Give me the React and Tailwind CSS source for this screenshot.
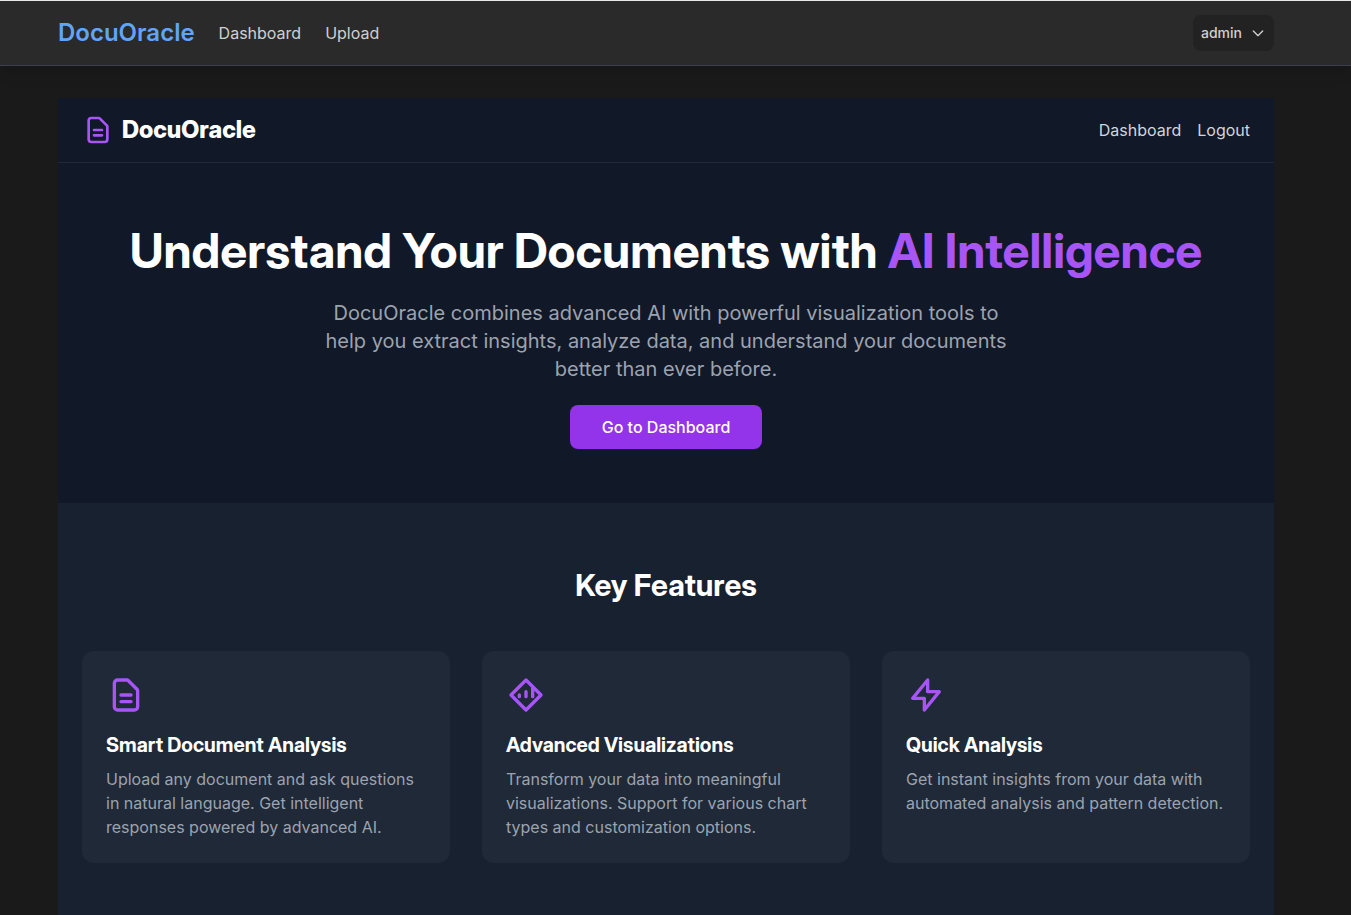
const iconPaths = {
  document:
    "M9 12h6m-6 4h6m2 5H7a2 2 0 01-2-2V5a2 2 0 012-2h5.586a1 1 0 01.707.293l5.414 5.414a1 1 0 01.293.707V19a2 2 0 01-2 2z",
  chart: "M8 13v-1m4 1v-3m4 3V8M12 21l9-9-9-9-9 9 9 9z",
  bolt: "M13 10V3L4 14h7v7l9-11h-7z",
  chevron: "M19 9l-7 7-7-7",
};

const features = [
  {
    icon: "document",
    title: "Smart Document Analysis",
    text: "Upload any document and ask questions in natural language. Get intelligent responses powered by advanced AI.",
  },
  {
    icon: "chart",
    title: "Advanced Visualizations",
    text: "Transform your data into meaningful visualizations. Support for various chart types and customization options.",
  },
  {
    icon: "bolt",
    title: "Quick Analysis",
    text: "Get instant insights from your data with automated analysis and pattern detection.",
  },
];

function Icon({ name, className }) {
  return (
    <svg
      className={className}
      viewBox="0 0 24 24"
      fill="none"
      stroke="currentColor"
      strokeWidth="2"
      strokeLinecap="round"
      strokeLinejoin="round"
      aria-hidden="true"
    >
      <path d={iconPaths[name]} />
    </svg>
  );
}

function TopNav() {
  return (
    <nav className="border-t border-b border-t-[#e5e7eb] border-b-[#374151] bg-[#2a2a2a] pr-[19px] shadow-lg">
      <div className="mx-auto flex h-16 max-w-7xl items-center justify-between px-8">
        <div className="flex items-center gap-6">
          <a href="#home" className="text-2xl font-semibold text-[#60a5fa]">
            DocuOracle
          </a>
          <a href="#dashboard" className="text-[#d0d0d0]">
            Dashboard
          </a>
          <a href="#upload" className="text-[#d0d0d0]">
            Upload
          </a>
        </div>
        <button
          type="button"
          className="flex h-9 items-center gap-2 rounded-lg bg-[#222222] px-2 text-sm font-medium text-[#d0d0d0]"
        >
          admin
          <Icon name="chevron" className="size-4" />
        </button>
      </div>
    </nav>
  );
}

function PanelHeader() {
  return (
    <header className="flex h-[65px] items-center justify-between border-b border-[#1f2937] px-6">
      <div className="flex items-center gap-2">
        <Icon name="document" className="size-8 text-[#a855f7]" />
        <span className="font-['Inter_Display','Inter',sans-serif] text-2xl font-extrabold text-white">
          DocuOracle
        </span>
      </div>
      <div className="flex gap-4 text-[#d1d5db]">
        <a href="#dashboard">Dashboard</a>
        <a href="#logout">Logout</a>
      </div>
    </header>
  );
}

function Hero() {
  return (
    <section className="flex flex-col items-center px-6 pt-16 pb-[54px] text-center">
      <h1 className="font-['Inter_Display','Inter',sans-serif] text-5xl font-bold text-white">
        Understand Your Documents with <span className="text-[#a855f7]">AI Intelligence</span>
      </h1>
      <p className="mt-6 max-w-[700px] text-xl text-[#9ca3af]">
        DocuOracle combines advanced AI with powerful visualization tools to help you extract
        insights, analyze data, and understand your documents better than ever before.
      </p>
      <a
        href="#dashboard"
        className="mt-[22px] rounded-lg bg-[#9333ea] px-8 py-[10px] font-medium text-white"
      >
        Go to Dashboard
      </a>
    </section>
  );
}

function Features() {
  return (
    <section className="bg-[#18212f] px-6 pt-16 pb-16">
      <h2 className="text-center font-['Inter_Display','Inter',sans-serif] text-3xl font-bold text-white">
        Key Features
      </h2>
      <div className="mt-12 grid grid-cols-3 gap-8">
        {features.map((feature) => (
          <article key={feature.title} className="rounded-xl bg-[#1f2937] p-6">
            <Icon name={feature.icon} className="size-10 text-[#a855f7]" />
            <h3 className="mt-4 font-['Inter_Display','Inter',sans-serif] text-xl font-bold text-white">
              {feature.title}
            </h3>
            <p className="mt-2 text-[#9ca3af]">{feature.text}</p>
          </article>
        ))}
      </div>
    </section>
  );
}

export default function App() {
  return (
    <div className="min-h-screen bg-[#1a1a1a] font-['Inter_Variable','Inter',sans-serif]">
      <TopNav />
      <main className="pr-[19px]">
        <div className="mx-auto max-w-7xl px-8 pt-8">
          <div className="bg-[#111827]">
            <PanelHeader />
            <Hero />
            <Features />
          </div>
        </div>
      </main>
    </div>
  );
}
